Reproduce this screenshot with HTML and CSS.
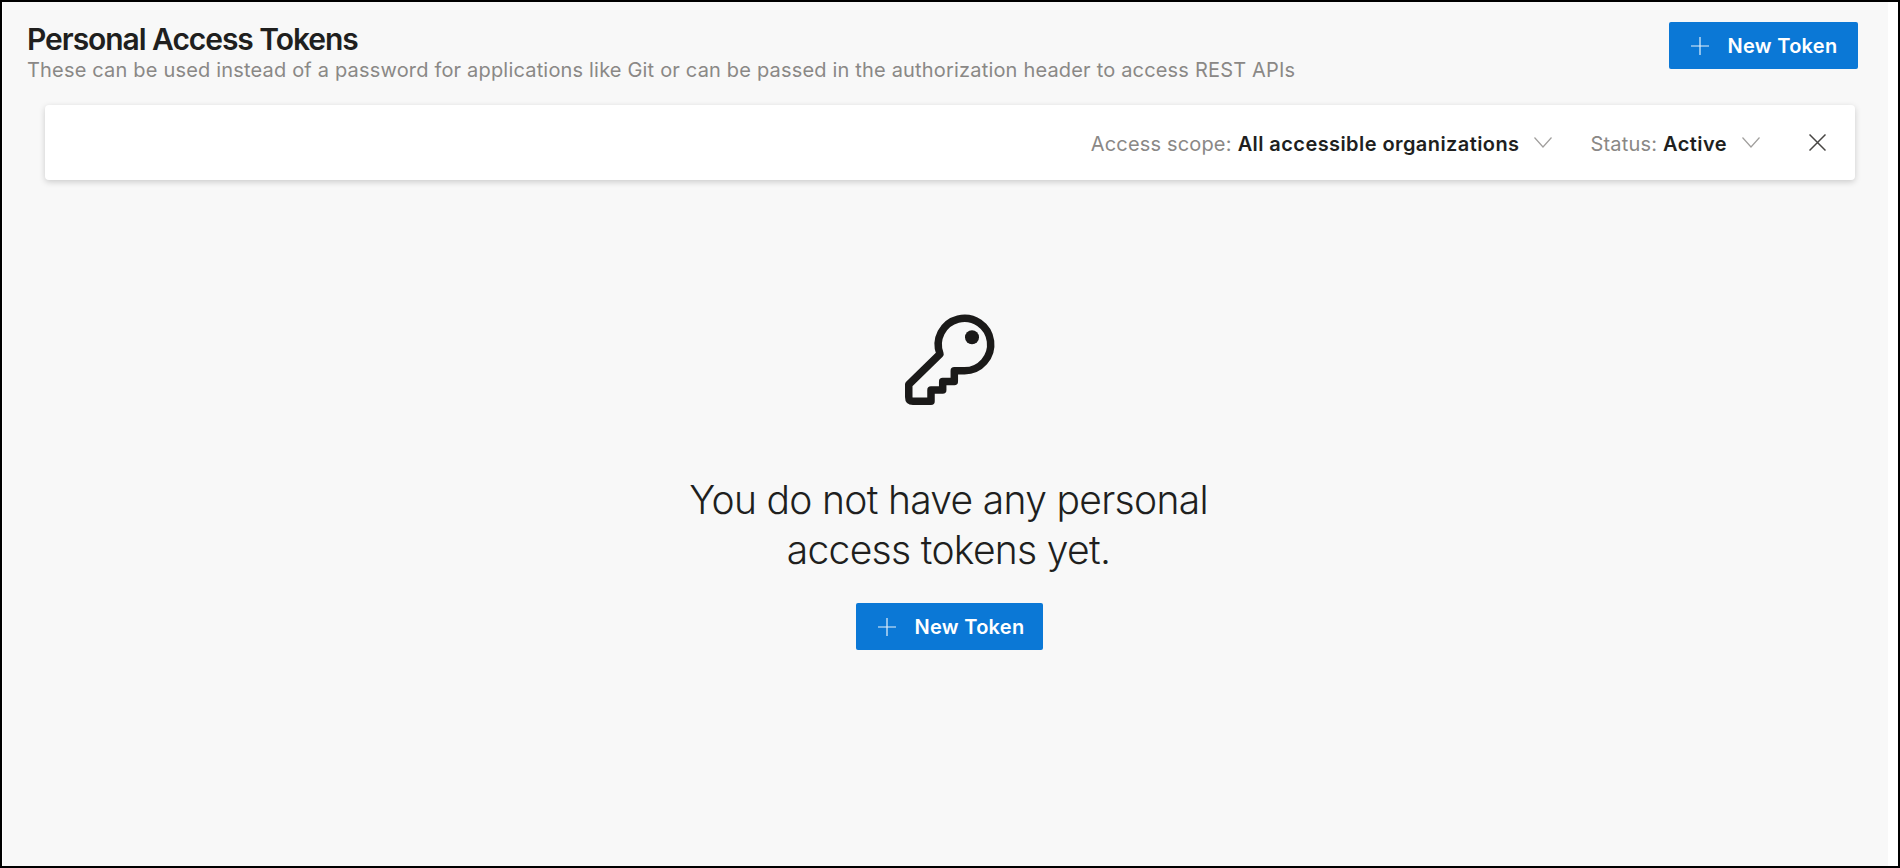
FILE: index.html
```html
<!DOCTYPE html>
<html lang="en">
<head>
<meta charset="utf-8">
<title>Personal Access Tokens</title>
<link rel="stylesheet" href="styles.css">
</head>
<body>
<div class="frame">
  <div class="page">
    <header class="header">
      <div class="heading">
        <h1 class="title">Personal Access Tokens</h1>
        <p class="subtitle">These can be used instead of a password for applications like Git or can be passed in the authorization header to access REST APIs</p>
      </div>
      <button class="btn" type="button">
        <svg class="btn-icon" viewBox="0 0 18 18"><path d="M9 0v18M0 9h18"/></svg>
        <span>New Token</span>
      </button>
    </header>
    <div class="filterbar">
      <div class="filter"><span class="filter-label">Access scope:</span><strong class="filter-value">All accessible organizations</strong>
        <svg class="chevron" viewBox="0 0 18 11"><path d="M.5.5 9 10 17.500.5"/></svg></div>
      <div class="filter"><span class="filter-label">Status:</span><strong class="filter-value">Active</strong>
        <svg class="chevron" viewBox="0 0 18 11"><path d="M.5.5 9 10 17.500.5"/></svg></div>
      <svg class="close" viewBox="0 0 17 17"><path d="M.5.500l16 16M16.500.500l-16 16"/></svg>
    </div>
    <main class="empty">
      <svg class="key" viewBox="24 15 90 90">
        <path class="key-line" d="M59 54 27.750 84.500V97q0 4.250 4.250 4.250H50V90h11.700V81.500H73.300V70.750H83.500A26.250 26.250 0 1 0 59 54Z"/>
        <circle class="key-dot" cx="91" cy="37.300" r="7"/>
      </svg>
      <h2 class="empty-text">You do not have any personal<br>access tokens yet.</h2>
      <button class="btn btn-small" type="button">
        <svg class="btn-icon" viewBox="0 0 18 18"><path d="M9 0v18M0 9h18"/></svg>
        <span>New Token</span>
      </button>
    </main>
  </div>
</div>
</body>
</html>
```
FILE: styles.css
```css
* { box-sizing: border-box; }
html, body { margin: 0; height: 100%; }
body { font-family: Inter, "Liberation Sans", sans-serif; color: #201f1e; background: #fff; }
.frame { height: 868px; border: 2px solid #000; background: #fff; overflow: hidden; }
.page { height: 100%; margin: 0 10px 0 1px; padding: 20px 30px 0 24px; background: #f8f8f8; display: flex; flex-direction: column; }
.header { display: flex; justify-content: space-between; align-items: flex-start; }
.title { margin: 0; font-size: 30px; line-height: 34px; font-weight: 600; letter-spacing: -1.05px; color: #201f1e; }
.subtitle { margin: 2px 0 0; font-size: 20px; line-height: 24px; font-weight: 400; letter-spacing: .18px; color: #8a8886; }
.btn { display: inline-flex; align-items: center; justify-content: center; gap: 18px; width: 189px; height: 47px; flex: none; border: none; border-radius: 2px; background: #0b78d6; color: #fff; font: 600 20px Inter, "Liberation Sans", sans-serif; letter-spacing: .3px; padding: 0 0 0 2px; }
.btn-small { width: 187px; padding-left: 4px; }
.btn-icon { width: 18px; height: 18px; fill: none; stroke: #fff; stroke-width: 1.2; opacity: .9; }
.filterbar { margin: 23px 3px 0 18px; height: 75px; flex: none; background: #fff; border-radius: 4px; box-shadow: 0 2px 6px rgba(0,0,0,.18); display: flex; align-items: center; justify-content: flex-end; gap: 38px; padding-right: 29px; }
.filter { display: flex; align-items: center; gap: 6px; padding-top: 2px; font-size: 20px; letter-spacing: .17px; white-space: nowrap; }
.filter-label { color: #8a8886; }
.filter-value { font-weight: 600; letter-spacing: .42px; color: #201f1e; }
.chevron { width: 18px; height: 11px; margin: -2px 0 0 9px; fill: none; stroke: #a19f9d; stroke-width: 1.2; }
.close { width: 17px; height: 17px; margin-left: 11px; fill: none; stroke: #484644; stroke-width: 1.5; }
.empty { display: flex; flex-direction: column; align-items: center; padding-top: 135px; margin: 0 -38px 0 -24px; }
.key { width: 90px; height: 90px; overflow: visible; }
.key-line { fill: none; stroke: #1b1a19; stroke-width: 7.5; stroke-linejoin: round; }
.key-dot { fill: #1b1a19; }
.empty-text { margin: 70px 2px 28px 0; font-size: 39px; line-height: 50px; font-weight: 300; letter-spacing: -.68px; text-align: center; color: #201f1e; }
```
